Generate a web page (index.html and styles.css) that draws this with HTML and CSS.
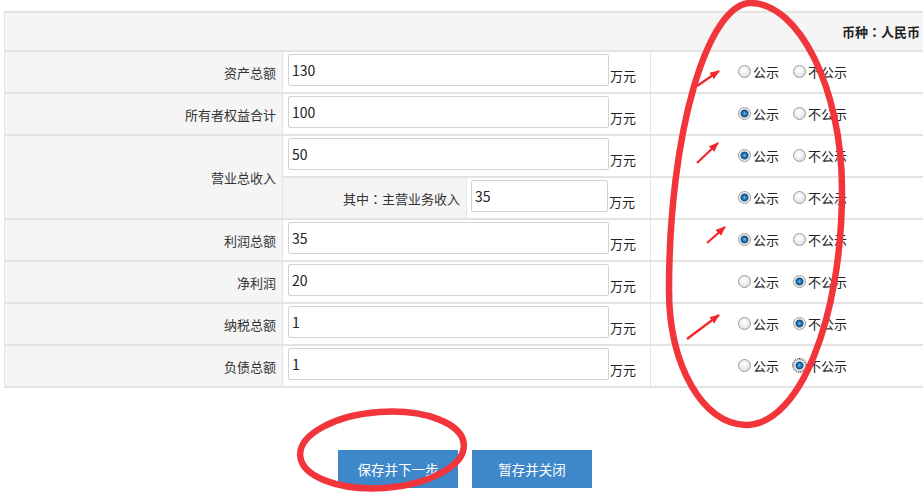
FILE: index.html
```html
<!DOCTYPE html>
<html lang="zh-CN">
<head>
<meta charset="utf-8">
<title>财务信息</title>
<link rel="stylesheet" href="styles.css">
</head>
<body>
<div class="page">
  <table class="fin">
    <colgroup><col class="c-label"><col class="c-val"><col class="c-pub"></colgroup>
    <tr class="head"><td colspan="3"><div class="head-cell">币种<span class="colon">：</span>人民币</div></td></tr>
    <tr>
      <th>资产总额</th>
      <td class="val"><div class="field"><input class="inp" value="130"><span class="unit">万元</span></div></td>
      <td class="pub"><label class="opt"><input type="radio" class="rd" name="r1">公示</label><label class="opt"><input type="radio" class="rd" name="r1">不公示</label></td>
    </tr>
    <tr>
      <th>所有者权益合计</th>
      <td class="val"><div class="field"><input class="inp" value="100"><span class="unit">万元</span></div></td>
      <td class="pub"><label class="opt"><input type="radio" class="rd" name="r2" checked>公示</label><label class="opt"><input type="radio" class="rd" name="r2">不公示</label></td>
    </tr>
    <tr>
      <th rowspan="2">营业总收入</th>
      <td class="val"><div class="field"><input class="inp" value="50"><span class="unit">万元</span></div></td>
      <td class="pub"><label class="opt"><input type="radio" class="rd" name="r3" checked>公示</label><label class="opt"><input type="radio" class="rd" name="r3">不公示</label></td>
    </tr>
    <tr>
      <td class="val"><div class="sub"><div class="sub-label">其中<span class="colon">：</span>主营业务收入</div><div class="field sub-field"><input class="inp short" value="35"><span class="unit">万元</span></div></div></td>
      <td class="pub"><label class="opt"><input type="radio" class="rd" name="r4" checked>公示</label><label class="opt"><input type="radio" class="rd" name="r4">不公示</label></td>
    </tr>
    <tr>
      <th>利润总额</th>
      <td class="val"><div class="field"><input class="inp" value="35"><span class="unit">万元</span></div></td>
      <td class="pub"><label class="opt"><input type="radio" class="rd" name="r5" checked>公示</label><label class="opt"><input type="radio" class="rd" name="r5">不公示</label></td>
    </tr>
    <tr>
      <th>净利润</th>
      <td class="val"><div class="field"><input class="inp" value="20"><span class="unit">万元</span></div></td>
      <td class="pub"><label class="opt"><input type="radio" class="rd" name="r6">公示</label><label class="opt"><input type="radio" class="rd" name="r6" checked>不公示</label></td>
    </tr>
    <tr>
      <th>纳税总额</th>
      <td class="val"><div class="field"><input class="inp" value="1"><span class="unit">万元</span></div></td>
      <td class="pub"><label class="opt"><input type="radio" class="rd" name="r7">公示</label><label class="opt"><input type="radio" class="rd" name="r7" checked>不公示</label></td>
    </tr>
    <tr>
      <th>负债总额</th>
      <td class="val"><div class="field"><input class="inp" value="1"><span class="unit">万元</span></div></td>
      <td class="pub"><label class="opt"><input type="radio" class="rd" name="r8">公示</label><label class="opt"><input type="radio" class="rd focus" name="r8" checked>不公示</label></td>
    </tr>
  </table>
  <div class="actions">
    <button class="btn">保存并下一步</button>
    <button class="btn">暂存并关闭</button>
  </div>
</div>
<svg class="marks" width="923" height="493" viewBox="0 0 923 493">
  <defs>
    <marker id="ah" markerUnits="userSpaceOnUse" markerWidth="12" markerHeight="10" refX="9" refY="4" orient="auto">
      <path d="M0,0 L10,4 L0,8 Z" fill="#f0262b"/>
    </marker>
  </defs>
  <path d="M751,3 C798,3 842,87 842,190 C842,320 799,425 746,425 C703,425 669,365 669,290 C669,131 708,3 751,3 Z" fill="none" stroke="#f2353a" stroke-width="6.5"/>
  <ellipse cx="382" cy="450" rx="82" ry="38" transform="rotate(-4 382 450)" fill="none" stroke="#f2353a" stroke-width="6.5"/>
  <g stroke="#f0262b" stroke-width="2.2" fill="none" marker-end="url(#ah)">
    <line x1="697" y1="86" x2="719" y2="71"/>
    <line x1="697" y1="163" x2="718" y2="143"/>
    <line x1="707" y1="243" x2="725" y2="227"/>
    <line x1="687" y1="339" x2="719" y2="315"/>
  </g>
</svg>
</body>
</html>
```

FILE: styles.css
```css
html, body {
  margin: 0;
  padding: 0;
  background: #fff;
  overflow: hidden;
}
body {
  position: relative;
  width: 923px;
  height: 493px;
  font-family: "Noto Sans CJK SC", "Microsoft YaHei", sans-serif;
  font-size: 13px;
  color: #333;
}
.page {
  padding: 11px 0 0 4px;
  width: 922px;
}
.fin {
  width: 922px;
  table-layout: fixed;
  border-collapse: collapse;
}
.c-label { width: 278px; }
.c-val { width: 368px; }
.c-pub { width: 276px; }
.fin td, .fin th {
  padding: 0;
  border-top: 2px solid #e3e3e3;
  border-bottom: 2px solid #e3e3e3;
  border-left: 1px solid #e3e3e3;
  border-right: 1px solid #e3e3e3;
}
.fin th {
  background: #f5f5f5;
  font-weight: normal;
  text-align: right;
  vertical-align: middle;
  padding-right: 6px;
  color: #333;
}
.head td {
  background: #f5f5f5;
}
.head-cell {
  height: 37px;
  display: flex;
  align-items: center;
  justify-content: flex-end;
  padding-right: 6px;
  font-weight: bold;
  color: #222;
}
.colon {
  font-family: "Noto Sans CJK TC", "Noto Sans CJK SC", sans-serif;
}
.field {
  height: 40px;
  display: flex;
  align-items: flex-end;
  padding-left: 5px;
}
.inp {
  box-sizing: border-box;
  width: 321px;
  height: 32px;
  margin: 0 1px 6px 0;
  padding: 0 4px 0 3px;
  border: 1px solid #d3d3d3;
  border-radius: 2px;
  font-family: "Noto Sans CJK SC", sans-serif;
  font-size: 14px;
  color: #222;
  background: #fff;
  outline: none;
}
.inp.short {
  width: 137px;
}
.unit {
  line-height: 17px;
  margin-bottom: 8px;
  color: #222;
}
.sub {
  display: flex;
  height: 40px;
}
.sub-label {
  width: 177px;
  background: #f5f5f5;
  border-right: 1px solid #e3e3e3;
  display: flex;
  align-items: center;
  justify-content: flex-end;
  padding-right: 6px;
}
.sub-field {
  padding-left: 4px;
}
.pub {
  vertical-align: middle;
  padding-left: 87px !important;
  white-space: nowrap;
}
.opt {
  display: inline-flex;
  align-items: center;
  margin-right: 14px;
  color: #222;
}
.rd {
  appearance: none;
  -webkit-appearance: none;
  box-sizing: border-box;
  width: 13px;
  height: 13px;
  margin: 0 2px 0 0;
  border-radius: 50%;
  border: 1px solid #9d9d9d;
  background: radial-gradient(circle at 45% 40%, #ffffff 0, #f1f1f1 40%, #cfcfcf 100%);
}
.rd:checked {
  background: radial-gradient(circle at 50% 50%, #7cc6ee 0, #2b83c2 1.5px, #154f82 3.5px, #f3f3f3 4.5px, #dcdcdc 100%);
}
.rd.focus {
  outline: 1px dotted #333;
  outline-offset: 0;
}
.actions {
  display: flex;
  justify-content: center;
  gap: 14px;
  margin-top: 62px;
}
.btn {
  width: 120px;
  height: 38px;
  border: none;
  background: #3e87c8;
  color: #fff;
  font-family: "Noto Sans CJK SC", sans-serif;
  font-size: 13.5px;
  padding: 0;
}
.marks {
  position: absolute;
  left: 0;
  top: 0;
  pointer-events: none;
}
```
